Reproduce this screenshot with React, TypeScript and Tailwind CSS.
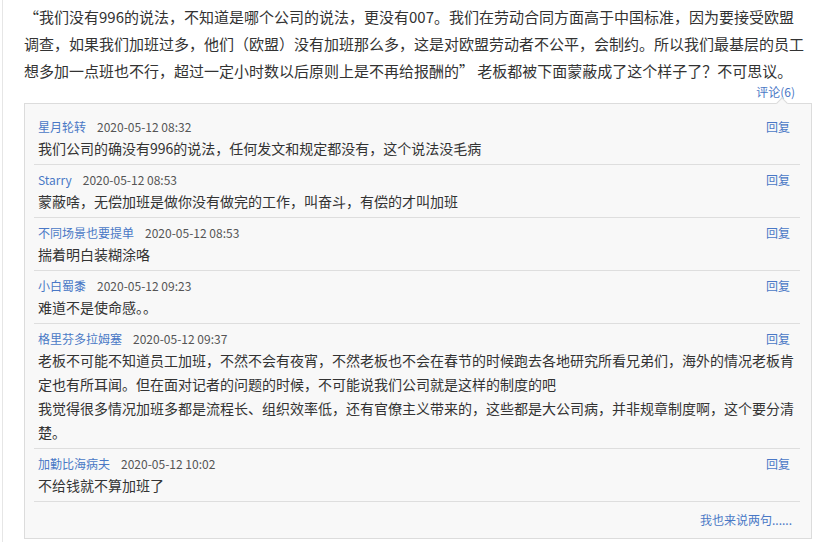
import React from "react"

type Comment = {
  name: string
  time: string
  content: string[]
}

const comments: Comment[] = [
  {
    name: "星月轮转",
    time: "2020-05-12 08:32",
    content: ["我们公司的确没有996的说法，任何发文和规定都没有，这个说法没毛病"],
  },
  {
    name: "Starry",
    time: "2020-05-12 08:53",
    content: ["蒙蔽啥，无偿加班是做你没有做完的工作，叫奋斗，有偿的才叫加班"],
  },
  {
    name: "不同场景也要提单",
    time: "2020-05-12 08:53",
    content: ["揣着明白装糊涂咯"],
  },
  {
    name: "小白蜀黍",
    time: "2020-05-12 09:23",
    content: ["难道不是使命感。。"],
  },
  {
    name: "格里芬多拉姆塞",
    time: "2020-05-12 09:37",
    content: [
      "老板不可能不知道员工加班，不然不会有夜宵，不然老板也不会在春节的时候跑去各地研究所看兄弟们，海外的情况老板肯定也有所耳闻。但在面对记者的问题的时候，不可能说我们公司就是这样的制度的吧",
      "我觉得很多情况加班多都是流程长、组织效率低，还有官僚主义带来的，这些都是大公司病，并非规章制度啊，这个要分清楚。",
    ],
  },
  {
    name: "加勤比海病夫",
    time: "2020-05-12 10:02",
    content: ["不给钱就不算加班了"],
  },
]

function CommentItem({ comment }: { comment: Comment }) {
  return (
    <li className="pl-[4px] pt-[6px] pb-[4px] border-b border-[#dedede]">
      <div className="flex items-center justify-between h-[18px] text-[12px] leading-[18px]">
        <div className="flex items-center">
          <a href="#" className="text-[#4a78c6]">
            {comment.name}
          </a>
          <span className="ml-[11px] text-[#555]">{comment.time}</span>
        </div>
        <a href="#" className="mr-[10px] text-[#4a78c6]">
          回复
        </a>
      </div>
      {comment.content.map((line, i) => (
        <p key={i} className="text-[14px] leading-[24px] text-[#333]">
          {line}
        </p>
      ))}
    </li>
  )
}

export default function App() {
  return (
    <div
      className="min-h-[542px] w-[810px] ml-[2px] border-l border-[#e6e6e6] bg-white pl-[21px] pt-[3px]"
      style={{ fontFamily: '"Noto Sans CJK SC", "Noto Sans", sans-serif' }}
    >
      <p className="pr-[6px] text-[15px] leading-[27px] text-[#333]">
        “我们没有996的说法，不知道是哪个公司的说法，更没有007。我们在劳动合同方面高于中国标准，因为要接受欧盟调查，如果我们加班过多，他们（欧盟）没有加班那么多，这是对欧盟劳动者不公平，会制约。所以我们最基层的员工想多加一点班也不行，超过一定小时数以后原则上是不再给报酬的”
        老板都被下面蒙蔽成了这个样子了？不可思议。
      </p>

      <div className="flex justify-end pr-[17px] text-[12px] leading-[16px]">
        <a href="#" className="text-[#4a78c6]">
          评论(6)
        </a>
      </div>

      <div className="relative mt-[3px] border border-[#dcdcdc] bg-[#f8f8f8] pl-[9px] pr-[11px] pt-[8px]">
        {/* little pointer under the 评论 link */}
        <span className="absolute -top-[5px] right-[25px] h-[8px] w-[8px] rotate-45 border-l border-t border-[#dcdcdc] bg-[#f8f8f8]" />

        <ul>
          {comments.map((c) => (
            <CommentItem key={c.name} comment={c} />
          ))}
        </ul>

        <div className="flex justify-end pr-[8px] text-[12px] leading-[36px]">
          <a href="#" className="text-[#4a78c6]">
            我也来说两句......
          </a>
        </div>
      </div>
    </div>
  )
}
